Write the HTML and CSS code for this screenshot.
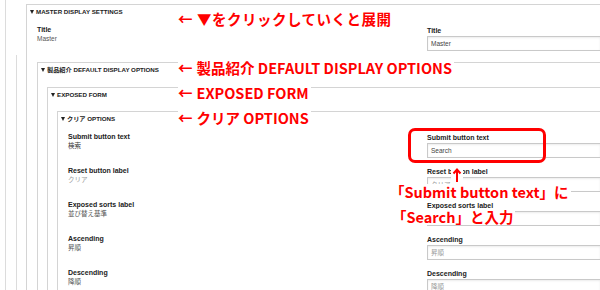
FILE: index.html
```html
<!DOCTYPE html>
<html lang="ja">
<head>
    <meta charset="UTF-8">
    <title>Master display settings</title>
    <link rel="stylesheet" href="styles.css">
</head>
<body>
    <div class="page">

        <section class="box lvl1">
            <div class="box-head"><span class="caret"></span>MASTER DISPLAY SETTINGS</div>
            <div class="box-body">
                <div class="field">
                    <div><div class="lbl">Title</div><div class="val">Master</div></div>
                    <div class="right"><div class="lbl">Title</div><div class="input">Master</div></div>
                </div>

                <section class="box lvl2">
                    <div class="box-head"><span class="caret"></span>製品紹介 DEFAULT DISPLAY OPTIONS</div>
                    <div class="box-body">

                        <section class="box lvl3">
                            <div class="box-head"><span class="caret"></span>EXPOSED FORM</div>
                            <div class="box-body">

                                <section class="box lvl4">
                                    <div class="box-head"><span class="caret"></span>クリア OPTIONS</div>
                                    <div class="box-body">
                                        <div class="field">
                                            <div><div class="lbl">Submit button text</div><div class="val dark">検索</div></div>
                                            <div class="right"><div class="lbl">Submit button text</div><div class="input">Search</div></div>
                                        </div>
                                        <div class="field">
                                            <div><div class="lbl">Reset button label</div><div class="val muted">クリア</div></div>
                                            <div class="right"><div class="lbl">Reset button label</div><div class="input muted">クリア</div></div>
                                        </div>
                                        <div class="field">
                                            <div><div class="lbl">Exposed sorts label</div><div class="val">並び替え基準</div></div>
                                            <div class="right"><div class="lbl">Exposed sorts label</div><div class="input muted">並び替え基準</div></div>
                                        </div>
                                        <div class="field">
                                            <div><div class="lbl">Ascending</div><div class="val">昇順</div></div>
                                            <div class="right"><div class="lbl">Ascending</div><div class="input muted">昇順</div></div>
                                        </div>
                                        <div class="field">
                                            <div><div class="lbl">Descending</div><div class="val">降順</div></div>
                                            <div class="right"><div class="lbl">Descending</div><div class="input muted">降順</div></div>
                                        </div>
                                    </div>
                                </section>

                            </div>
                        </section>

                    </div>
                </section>
            </div>
        </section>

        <!-- annotations -->
        <div class="note n1"><span class="arr">←</span>▼をクリックしていくと展開</div>
        <div class="note n2"><span class="arr">←</span>製品紹介 DEFAULT DISPLAY OPTIONS</div>
        <div class="note n3"><span class="arr">←</span>EXPOSED FORM</div>
        <div class="note n4"><span class="arr">←</span>クリア OPTIONS</div>

        <div class="highlight"></div>
        <svg class="up-arrow" width="12" height="15" viewBox="0 0 12 15">
            <rect width="12" height="15" fill="#fff"/>
            <path d="M6 3V15M2.5 6.5L6 2.5L9.5 6.5" fill="none" stroke="#f00" stroke-width="2"/>
        </svg>
        <div class="note n5">「Submit button text」に</div>
        <div class="note n6">「Search」と入力</div>
    </div>
</body>
</html>
```
FILE: styles.css
```css
html, body {
    margin: 0;
    height: 290px;
    overflow: hidden;
    background-color: #fff;
}
body {
    font-family: "Liberation Sans", "Noto Sans CJK JP", sans-serif;
    color: #222;
}

.page {
    position: relative;
    margin-left: 5px;
    border-left: 1px solid #dcdcdc;
    padding: 4px 0 0 20px;
    height: 400px;
}
.page::before {
    content: "";
    position: absolute;
    left: 10px;
    top: 55px;
    bottom: 0;
    border-left: 1px solid #dcdcdc;
}

.box {
    border-top: 1px solid #d4d4d4;
    border-left: 1px solid #d4d4d4;
    background-color: #fff;
}
.box .box {
    margin-top: 3px;
}
.box-head {
    display: flex;
    align-items: center;
    height: 13px;
    padding-left: 3px;
    font-size: 6.2px;
    font-weight: bold;
    color: #222;
    white-space: nowrap;
}
.caret {
    width: 0;
    height: 0;
    border-left: 2.5px solid transparent;
    border-right: 2.5px solid transparent;
    border-top: 4px solid #222;
    margin-right: 2px;
}
.box-body {
    padding-top: 7px;
}
.lvl1 > .box-body { padding-left: 10px; }
.lvl2 > .box-body { padding-left: 9px; padding-top: 8px; }
.lvl3 > .box-body { padding-left: 9px; }
.lvl4 > .box-body { padding-left: 10px; }

.field {
    display: grid;
    height: 34px;
}
.lvl1 > .box-body > .field { grid-template-columns: 390px 1fr; }
.lvl4 > .box-body > .field { grid-template-columns: 359px 1fr; }

.lbl {
    font-size: 7px;
    line-height: 9px;
    font-weight: bold;
    color: #222;
    white-space: nowrap;
}
.val {
    font-size: 6.5px;
    line-height: 9px;
    color: #555;
}
.val.dark {
    color: #333;
}
.muted {
    color: #9a9a9a !important;
}
.right .lbl {
    margin-top: 1px;
}
.input {
    margin-top: 1px;
    height: 13px;
    line-height: 13px;
    padding-left: 3px;
    border: 1px solid #c9c9c9;
    border-right: 0;
    box-shadow: inset 0 1px 2px rgba(0,0,0,0.08);
    font-size: 6.5px;
    color: #444;
}

/* red annotations */
.note {
    position: absolute;
    font-family: "Noto Sans CJK JP", sans-serif;
    font-size: 14.5px;
    font-weight: bold;
    line-height: 16px;
    color: #f00;
    background-color: #fff;
    white-space: nowrap;
    padding-right: 2px;
}
.arr {
    margin-right: 4px;
}
.n1 { left: 172px; top: 11px; letter-spacing: 0.5px; }
.n2 { left: 172px; top: 60px; }
.n3 { left: 172px; top: 85px; }
.n4 { left: 172px; top: 110px; }
.n5 { left: 384px; top: 184px; }
.n6 { left: 386px; top: 209px; }

.highlight {
    position: absolute;
    left: 402px;
    top: 128px;
    width: 138px;
    height: 35px;
    box-sizing: border-box;
    border: 3px solid #f00;
    border-radius: 7px;
}
.up-arrow {
    position: absolute;
    left: 445px;
    top: 167px;
}
```
